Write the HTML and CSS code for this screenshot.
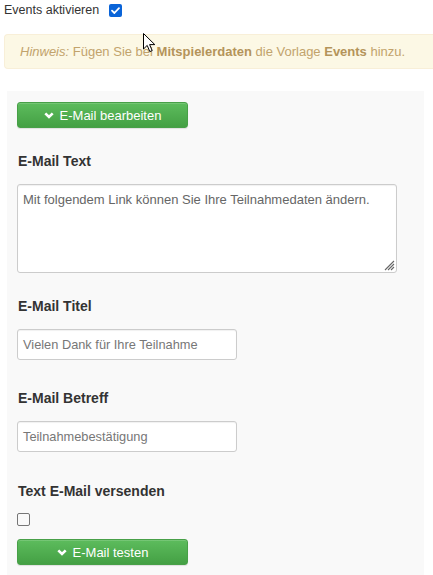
FILE: index.html
```html
<!DOCTYPE html>
<html lang="de">
<head>
<meta charset="utf-8">
<title>Events</title>
<link rel="stylesheet" href="styles.css">
</head>
<body>
<div class="top">
  <span class="top-label">Events aktivieren</span>
  <span class="cb cb-checked"><svg viewBox="0 0 13 13" width="13" height="13"><path d="M3 6.6 L5.4 9 L10 4.2" fill="none" stroke="#fff" stroke-width="1.8" stroke-linecap="round" stroke-linejoin="round"/></svg></span>
</div>
<div class="alert"><em>Hinweis:</em> Fügen Sie bei <b>Mitspielerdaten</b> die Vorlage <b>Events</b> hinzu.</div>
<div class="panel">
  <button class="btn"><svg class="chev" viewBox="0 0 10 7" width="10" height="7"><path d="M1.3 1.3 L5 5 L8.7 1.3" fill="none" stroke="#fff" stroke-width="2.6"/></svg>E-Mail bearbeiten</button>
  <div class="field f-text">
    <div class="label">E-Mail Text</div>
    <div class="textarea">Mit folgendem Link können Sie Ihre Teilnahmedaten ändern.<svg class="grip" viewBox="0 0 11 11" width="11" height="11"><path d="M10 1 L1 10 M10 4 L4 10 M10 7 L7 10" stroke="#666" stroke-width="1.1"/></svg></div>
  </div>
  <div class="field f-title">
    <div class="label">E-Mail Titel</div>
    <div class="input">Vielen Dank für Ihre Teilnahme</div>
  </div>
  <div class="field f-subject">
    <div class="label">E-Mail Betreff</div>
    <div class="input">Teilnahmebestätigung</div>
  </div>
  <div class="field f-send">
    <div class="label">Text E-Mail versenden</div>
    <span class="cb cb-empty"></span>
  </div>
  <button class="btn btn-test"><svg class="chev" viewBox="0 0 10 7" width="10" height="7"><path d="M1.3 1.3 L5 5 L8.7 1.3" fill="none" stroke="#fff" stroke-width="2.6"/></svg>E-Mail testen</button>
</div>
<svg class="cursor" viewBox="0 0 13 20" width="13" height="20"><path d="M0.5 0.5 L0.5 16 L4.2 12.4 L6.8 18.6 L9.2 17.6 L6.6 11.6 L11.8 11.6 Z" fill="#fff" stroke="#000" stroke-width="1" stroke-linejoin="miter"/></svg>
</body>
</html>
```
FILE: styles.css
```css
html, body {
  margin: 0;
  padding: 0;
  overflow: hidden;
  background: #fff;
}
body {
  font-family: "Liberation Sans", Arial, sans-serif;
  color: #333;
  position: relative;
  width: 433px;
  height: 575px;
}
.top {
  display: flex;
  align-items: center;
  gap: 10px;
  padding: 3px 0 0 4px;
  height: 15px;
}
.top-label {
  font-size: 12.5px;
  line-height: 15px;
}
.cb {
  display: inline-block;
  width: 13px;
  height: 13px;
  box-sizing: border-box;
  border-radius: 2px;
}
.cb svg { display: block; }
.cb-checked {
  background: #0a64d8;
}
.cb-empty {
  border: 1.5px solid #767676;
  display: block;
}
.alert {
  margin: 16px 0 0 4px;
  height: 35px;
  box-sizing: border-box;
  background: #fcf8e5;
  border: 1px solid #f8efd8;
  border-right: none;
  border-radius: 4px 0 0 4px;
  padding: 0 15px;
  font-size: 13px;
  line-height: 33px;
  color: #c2a36c;
  white-space: nowrap;
}
.alert b { color: #b4945a; }
.panel {
  margin: 22px 0 0 7px;
  width: 417px;
  height: 484px;
  background: #f9f9f9;
  padding: 11px 10px 0;
  box-sizing: border-box;
}
.btn {
  display: flex;
  align-items: center;
  justify-content: center;
  gap: 6px;
  width: 171px;
  height: 26px;
  padding: 0;
  border: 1px solid #48a048;
  border-radius: 3px;
  background: linear-gradient(#5dbc5d, #44a044);
  color: #fff;
  font-family: inherit;
  font-size: 13px;
  box-shadow: inset 0 1px 0 rgba(255,255,255,0.15), 0 1px 1px rgba(0,0,0,0.1);
}
.chev { display: block; margin-top: 1px; }
.field { display: flex; flex-direction: column; align-items: flex-start; }
.label {
  font-size: 14px;
  font-weight: bold;
  line-height: 20px;
  margin-left: 1px;
  margin-bottom: 13px;
}
.f-text .label { margin-top: 23px; margin-bottom: 13px; }
.f-title .label { margin-top: 23px; }
.f-subject .label { margin-top: 28px; }
.f-send .label { margin-top: 29px; margin-bottom: 12px; }
.textarea {
  position: relative;
  width: 380px;
  height: 89px;
  box-sizing: border-box;
  background: #fff;
  border: 1px solid #ccc;
  border-radius: 3px;
  padding: 6px 5px;
  font-size: 13px;
  line-height: 17px;
  color: #666;
  box-shadow: inset 0 1px 1px rgba(0,0,0,0.06);
}
.grip {
  position: absolute;
  right: 1px;
  bottom: 1px;
}
.input {
  width: 220px;
  height: 31px;
  box-sizing: border-box;
  background: #fff;
  border: 1px solid #ccc;
  border-radius: 3px;
  padding: 0 5px;
  font-size: 12.8px;
  line-height: 29px;
  color: #777;
  box-shadow: inset 0 1px 1px rgba(0,0,0,0.06);
}
.btn-test { margin-top: 13px; }
.cursor {
  position: absolute;
  left: 143px;
  top: 33px;
}
```
